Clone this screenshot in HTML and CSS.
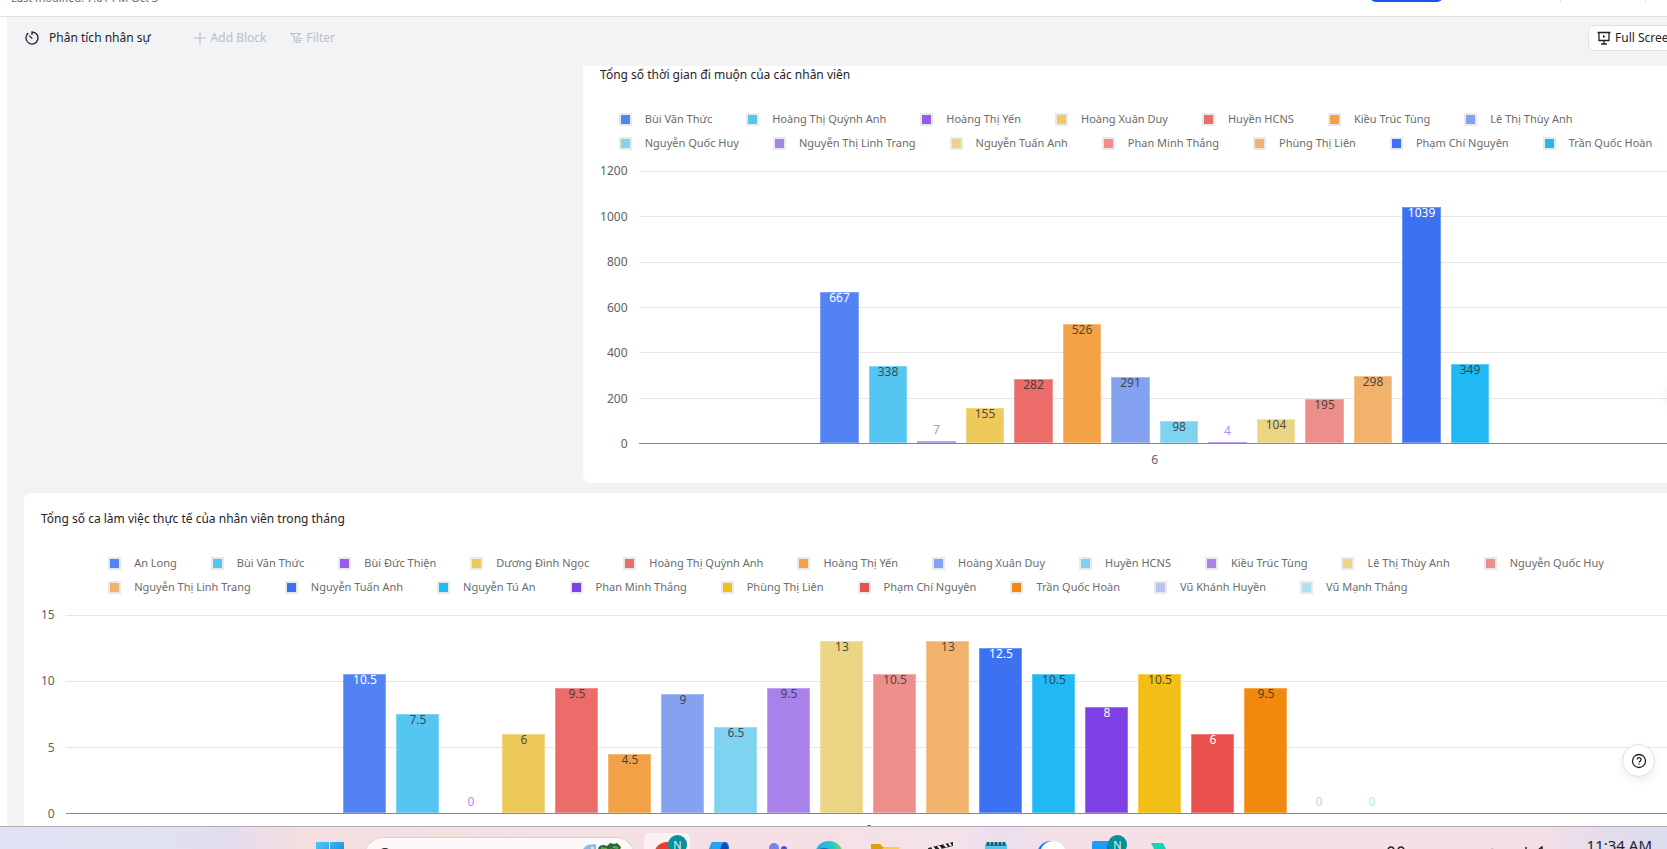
FILE: index.html
```html
<!DOCTYPE html>
<html lang="vi">
<head>
<meta charset="utf-8">
<title>Phân tích nhân sự</title>
<link rel="stylesheet" href="styles.css">
</head>
<body>
<header class="doc-header">
  <span class="modified">Last modified: 7:01 PM Oct 3</span>
  <div class="doc-actions">
    <button class="share" type="button" aria-label="Share"></button>
    <i class="divider"></i>
    <i class="divider"></i>
  </div>
</header>

<main class="workspace">
  <div class="toolbar">
    <h1 class="board-title">
      <svg class="icon" viewBox="0 0 14 14" width="14" height="14"><path d="M7 4V1a6 6 0 1 1-4 1.500M4.300 4.600 7.300 7.600M1.500 3.500 3.300 2.200" /></svg>
      Phân tích nhân sự
    </h1>
    <button class="tool" type="button" disabled>
      <svg class="icon thin" viewBox="0 0 12 12" width="12" height="12"><path d="M6 .5v11M.5 6h11"/></svg>
      Add Block
    </button>
    <button class="tool filter" type="button" disabled>
      <svg class="icon thin" viewBox="0 0 13 12" width="13" height="12"><path d="M1 1.500h9L7 5.400V10.500L4.500 9V5.400zM8.500 6.500h4M8.500 8.500h3M8.500 10.500h2"/></svg>
      Filter
    </button>
    <button class="fullscreen" type="button">
      <svg class="icon" viewBox="0 0 14 14" width="14" height="14"><path d="M.5 1.500h13M2 1.500v8h10v-8M7 9.500v3.500M4 13h6"/><path class="solid" d="M6 4v3l2.500-1.500z"/></svg>
      Full Screen
    </button>
  </div>

  <div class="canvas">
    <div class="board">
      <section class="card late">
        <h2>Tổng số thời gian đi muộn của các nhân viên</h2>
        <div class="legend">
          <ul>
            <li><i class="c1"></i>Bùi Văn Thức</li>
            <li><i class="c2"></i>Hoàng Thị Quỳnh Anh</li>
            <li><i class="c3"></i>Hoàng Thị Yến</li>
            <li><i class="c4"></i>Hoàng Xuân Duy</li>
            <li><i class="c5"></i>Huyền HCNS</li>
            <li><i class="c6"></i>Kiều Trúc Tùng</li>
            <li><i class="c7"></i>Lê Thị Thùy Anh</li>
          </ul>
          <ul>
            <li><i class="c8"></i>Nguyễn Quốc Huy</li>
            <li><i class="c9"></i>Nguyễn Thị Linh Trang</li>
            <li><i class="c10"></i>Nguyễn Tuấn Anh</li>
            <li><i class="c11"></i>Phan Minh Thắng</li>
            <li><i class="c12"></i>Phùng Thị Liên</li>
            <li><i class="c13"></i>Phạm Chí Nguyên</li>
            <li><i class="c14"></i>Trần Quốc Hoàn</li>
          </ul>
        </div>
        <div class="chart">
          <div class="y-axis"><span>1200</span><span>1000</span><span>800</span><span>600</span><span>400</span><span>200</span><span>0</span></div>
          <div class="plot">
            <div class="grid"><i></i><i></i><i></i><i></i><i></i><i></i><i></i></div>
            <ol class="bars">
              <li><b class="c1 light" style="height:55.6%">667</b></li>
              <li><b class="c2" style="height:28.2%">338</b></li>
              <li><span class="t3">7</span><b class="c9" style="height:0.7%"></b></li>
              <li><b class="c4" style="height:12.9%">155</b></li>
              <li><b class="c5" style="height:23.5%">282</b></li>
              <li><b class="c6" style="height:43.8%">526</b></li>
              <li><b class="c7" style="height:24.3%">291</b></li>
              <li><b class="c8" style="height:8.2%">98</b></li>
              <li><span class="t3">4</span><b class="c9" style="height:0.4%"></b></li>
              <li><b class="c10" style="height:8.7%">104</b></li>
              <li><b class="c11" style="height:16.3%">195</b></li>
              <li><b class="c12" style="height:24.8%">298</b></li>
              <li><b class="c13 light" style="height:86.6%">1039</b></li>
              <li><b class="c14" style="height:29.1%">349</b></li>
            </ol>
          </div>
          <div class="x-axis">6</div>
        </div>
      </section>

      <section class="card shifts">
        <h2>Tổng số ca làm việc thực tế của nhân viên trong tháng</h2>
        <div class="legend">
          <ul>
            <li><i class="c1"></i>An Long</li>
            <li><i class="c2"></i>Bùi Văn Thức</li>
            <li><i class="c3"></i>Bùi Đức Thiện</li>
            <li><i class="c4"></i>Dương Đình Ngọc</li>
            <li><i class="c5"></i>Hoàng Thị Quỳnh Anh</li>
            <li><i class="c6"></i>Hoàng Thị Yến</li>
            <li><i class="c7"></i>Hoàng Xuân Duy</li>
            <li><i class="c8"></i>Huyền HCNS</li>
            <li><i class="c9"></i>Kiều Trúc Tùng</li>
            <li><i class="c10"></i>Lê Thị Thùy Anh</li>
            <li><i class="c11"></i>Nguyễn Quốc Huy</li>
          </ul>
          <ul>
            <li><i class="c12"></i>Nguyễn Thị Linh Trang</li>
            <li><i class="c13"></i>Nguyễn Tuấn Anh</li>
            <li><i class="c14"></i>Nguyễn Tú An</li>
            <li><i class="c15"></i>Phan Minh Thắng</li>
            <li><i class="c16"></i>Phùng Thị Liên</li>
            <li><i class="c17"></i>Phạm Chí Nguyên</li>
            <li><i class="c18"></i>Trần Quốc Hoàn</li>
            <li><i class="c19"></i>Vũ Khánh Huyền</li>
            <li><i class="c20"></i>Vũ Mạnh Thắng</li>
          </ul>
        </div>
        <div class="chart">
          <div class="y-axis"><span>15</span><span>10</span><span>5</span><span>0</span></div>
          <div class="plot">
            <div class="grid"><i></i><i></i><i></i><i></i></div>
            <ol class="bars">
              <li><b class="c1 light" style="height:70%">10.5</b></li>
              <li><b class="c2" style="height:50%">7.5</b></li>
              <li><span class="t3">0</span></li>
              <li><b class="c4" style="height:40%">6</b></li>
              <li><b class="c5" style="height:63.3%">9.5</b></li>
              <li><b class="c6" style="height:30%">4.5</b></li>
              <li><b class="c7" style="height:60%">9</b></li>
              <li><b class="c8" style="height:43.3%">6.5</b></li>
              <li><b class="c9" style="height:63.3%">9.5</b></li>
              <li><b class="c10" style="height:86.7%">13</b></li>
              <li><b class="c11" style="height:70%">10.5</b></li>
              <li><b class="c12" style="height:86.7%">13</b></li>
              <li><b class="c13 light" style="height:83.3%">12.5</b></li>
              <li><b class="c14" style="height:70%">10.5</b></li>
              <li><b class="c15 light" style="height:53.3%">8</b></li>
              <li><b class="c16" style="height:70%">10.5</b></li>
              <li><b class="c17 light" style="height:40%">6</b></li>
              <li><b class="c18" style="height:63.3%">9.5</b></li>
              <li><span class="t19">0</span></li>
              <li><span class="t20">0</span></li>
            </ol>
          </div>
          <div class="x-axis">6</div>
        </div>
      </section>
    </div>
  </div>
</main>

<button class="side-handle" type="button" aria-label="Expand"></button>
<button class="help" type="button" aria-label="Help">
  <svg class="icon" viewBox="0 0 16 16" width="16" height="16"><circle cx="8" cy="8" r="6.500"/><path d="M6.200 6.600a1.900 1.900 0 1 1 2.700 1.700Q8 8.700 8 9.500M8 10.600v1.200"/></svg>
</button>

<footer class="taskbar">
  <div class="apps">
    <svg class="app start" viewBox="0 0 30 30" width="30" height="30"><defs><linearGradient id="win" x2="1" y2="1"><stop stop-color="#4cc9f8"/><stop offset="1" stop-color="#0a74d4"/></linearGradient></defs><path fill="url(#win)" d="M1 1h13v13H1zM15 1h14v13H15zM1 15h13v14H1zM15 15h14v14H15z"/></svg>
    <div class="search">
      <svg viewBox="0 0 20 20" width="20" height="20"><circle cx="9" cy="12" r="6" fill="none" stroke="#222" stroke-width="2"/></svg>
      <svg viewBox="0 0 42 20" width="42" height="20"><path d="M2 6l4-4 9-1v19H0z" fill="#8fb9e4"/><path d="M5 6h3v4H5zM10 4h3v4h-3z" fill="#d6e9f8"/><path d="M17 7q0-5 6-5l3 1 3-3 4 1 3-1 4 4-1 3 3 4-5-1-3 3 1 7h-5l1-7-6 3 2-5-6 2z" fill="#256b36"/><path d="M20 5l6 1M32 4l5 1M26 9l5-3" stroke="#5fae4a" stroke-width="2"/></svg>
    </div>
    <div class="app active">
      <svg viewBox="0 0 26 26" width="26" height="26"><circle cx="13" cy="13" r="13" fill="#e8402f"/><circle cx="13" cy="13" r="6" fill="#fff"/></svg>
      <span class="badge">N</span>
    </div>
    <svg class="app" viewBox="0 0 28 28" width="28" height="28"><path d="M7 1h15l2 4v20H3q-1-16 4-24z" fill="#1683e8"/><path d="M9 1h13q-6 2-8 9H4q1-7 5-9z" fill="#26a4f4"/><path d="M19 1q5 2 4 10l-7 4q-2-10 3-14z" fill="#1647b8"/></svg>
    <svg class="app" viewBox="0 0 28 28" width="28" height="28"><circle cx="14" cy="7" r="5" fill="#7b83eb"/><circle cx="24" cy="8" r="3" fill="#5059c9"/><path d="M0 8h16v14H0z" fill="#5b63cf"/><path d="M16 12h12v10H16z" fill="#5059c9"/></svg>
    <svg class="app" viewBox="0 0 28 28" width="28" height="28"><defs><linearGradient id="edge"><stop stop-color="#23a8e8"/><stop offset=".6" stop-color="#2bc3d2"/><stop offset="1" stop-color="#6ddc5a"/></linearGradient></defs><circle cx="14" cy="14" r="14" fill="url(#edge)"/><path d="M0 15q1-8 9-8 8 0 8 7-6-3-8 4-3 4 2 10Q0 26 0 15z" fill="#1470c0"/></svg>
    <svg class="app" viewBox="0 0 30 28" width="30" height="28"><path d="M1 3h9l3 3h16v8H1z" fill="#dda20a"/><path d="M1 9h10l3-3h15v20H1z" fill="#ffce3e"/></svg>
    <svg class="app" viewBox="0 0 28 28" width="28" height="28"><path d="M1 7 26 1v4L2 11z" fill="#222"/><path d="m5 6 3 3M11 5l3 3M17 3l3 3M22 2l2 3" stroke="#fff" stroke-width="2"/><path d="M2 12h24v14H2z" fill="#333"/></svg>
    <svg class="app" viewBox="0 0 28 28" width="28" height="28"><path d="M3 3h22v23H3z" fill="#54c8ec"/><path d="M6 1v4M10 1v4M14 1v4M18 1v4M22 1v4" stroke="#12606f" stroke-width="3"/></svg>
    <svg class="app" viewBox="0 0 28 28" width="28" height="28"><circle cx="14" cy="14" r="14" fill="#1677ff"/><circle cx="16" cy="13" r="13" fill="#fff"/></svg>
    <div class="app boxed">
      <svg viewBox="0 0 26 26" width="26" height="26"><path d="M0 2q0-2 2-2h22v26H0z" fill="#1f9cf5"/><path d="M15 4h11v18H15z" fill="#0f6fc0"/></svg>
      <span class="badge">N</span>
    </div>
    <svg class="app" viewBox="0 0 28 28" width="28" height="28"><path d="M6 2h12l5 10-5 9H6l5-9z" fill="#0bd8b6"/></svg>
  </div>
  <div class="tray">
    <svg viewBox="0 0 20 14" width="20" height="14"><path d="M2 5q0-4 3-4 3 0 3 4M12 5q0-4 3-4t3 4" fill="none" stroke="#222" stroke-width="1.500"/></svg>
    <svg class="tray-net" viewBox="0 0 60 14" width="60" height="14"><path d="M2 6q4-5 9 0M39 2h2M53 3l3-2v8" fill="none" stroke="#222" stroke-width="1.500"/></svg>
    <time>11:34 AM</time>
  </div>
</footer>
</body>
</html>
```
FILE: styles.css
```css
* { box-sizing: border-box; }

body {
  margin: 0;
  height: 100vh;
  display: flex;
  flex-direction: column;
  overflow: hidden;
  background: #fff;
  color: #1f2329;
  font: 12px/16px "Noto Sans", "Open Sans", sans-serif;
}

h1, h2, ul, ol { margin: 0; padding: 0; font-weight: 400; list-style: none; }
button { font: inherit; }

.icon { flex: none; fill: none; stroke: currentColor; stroke-width: 1.3; }
.icon.thin { stroke-width: 1.2; }
.icon .solid { fill: currentColor; stroke: none; }

/* Document header, scrolled almost out of view */
.doc-header {
  flex: none;
  height: 17px;
  display: flex;
  justify-content: space-between;
  align-items: flex-start;
  padding-left: 11px;
  overflow: hidden;
  border-bottom: 1px solid #dee0e3;
}
.modified { margin-top: -10px; color: #646a73; white-space: nowrap; font-size: 11px; }
.doc-actions { display: flex; align-items: flex-start; margin-top: -26px; padding-right: 21px; }
.share { width: 73px; height: 28px; margin-right: 117px; border: 0; border-radius: 6px; background: #1456f0; }
.divider { width: 1px; height: 28px; background: #dee0e3; }
.divider + .divider { margin-left: 84px; }

/* Dashboard */
.workspace {
  flex: 1;
  min-height: 0;
  display: flex;
  flex-direction: column;
  margin: 0 -21px 0 7px;
  background: #f1f3f5;
}
.toolbar {
  flex: none;
  height: 49px;
  display: flex;
  align-items: center;
  padding: 0 0 7px 18px;
}
.board-title { display: flex; align-items: center; gap: 10px; font-size: 12px; margin-right: 43px; }
.tool {
  display: flex;
  align-items: center;
  gap: 5px;
  margin-right: 24px;
  padding: 0;
  border: 0;
  background: none;
  color: #bbbfc4;
}
.tool.filter { gap: 3px; }
.fullscreen {
  display: flex;
  align-items: center;
  gap: 4px;
  height: 26px;
  width: 100px;
  margin-left: auto;
  padding: 0 8px;
  border: 1px solid #dee0e3;
  border-radius: 6px;
  background: #fff;
  color: #1f2329;
  white-space: nowrap;
}

.canvas { flex: 1; min-height: 0; overflow: hidden; padding-left: 17px; }
.board { display: flex; flex-direction: column; align-items: flex-end; gap: 10px; margin-top: -17px; }
.card { padding: 16px 17px 15px; border-radius: 8px; background: #fff; }
.card.late { width: 66.4%; }
.card.shifts { width: 100%; }
.card h2 { font-size: 12px; line-height: 20px; }

.legend { width: fit-content; margin: 22px auto 16px; color: #6b6b6b; font-size: 11px; }
.legend ul { display: flex; gap: 34px; }
.legend li { display: flex; align-items: center; gap: 13px; height: 24px; white-space: nowrap; }
.legend i { width: 13px; height: 13px; border: 2px solid #e8e9ec; }

.chart { display: grid; grid-template-columns: auto 1fr; column-gap: 11px; }
.y-axis {
  display: flex;
  flex-direction: column;
  justify-content: space-between;
  margin: -8px 0;
  text-align: right;
  color: #5f6165;
}
.plot { display: grid; }
.late .plot { height: 273px; }
.shifts .plot { height: 199px; }
.grid { grid-area: 1 / 1; display: flex; flex-direction: column; justify-content: space-between; }
.grid i { height: 1px; background: #e6e6e8; }
.grid i:last-child { background: #85878b; }
.bars { grid-area: 1 / 1; display: flex; gap: 10px; justify-self: center; padding-bottom: 1px; }
.late .bars { width: 64.8%; }
.shifts .bars { width: 65.4%; }
.bars li { flex: 1; display: flex; flex-direction: column; justify-content: flex-end; text-align: center; }
.bars b {
  font-weight: 400;
  line-height: 11px;
  color: #333d;
  box-shadow: inset 0 0 0 1px #fff4;
}
.bars b.light { color: #fff; }
.bars span { line-height: 12px; padding-bottom: 5px; }
.x-axis { grid-column: 2; margin-top: 8px; text-align: center; color: #5f6165; }

.c1 { background: #5383f2; }
.c2 { background: #55c5f1; }
.c3 { background: #935de9; }
.c4 { background: #edca5a; }
.c5 { background: #eb6c68; }
.c6 { background: #f2a147; }
.c7 { background: #84a2f0; }
.c8 { background: #7fd2f0; }
.c9 { background: #a981ea; }
.c10 { background: #ebd483; }
.c11 { background: #ec8e8a; }
.c12 { background: #f1b26c; }
.c13 { background: #3c72f2; }
.c14 { background: #20b9f3; }
.c15 { background: #7f41e6; }
.c16 { background: #f2bf16; }
.c17 { background: #e9504c; }
.c18 { background: #f2880e; }
.c19 { background: #b5c4f2; }
.c20 { background: #ade0f0; }
.t3 { color: #b08af0; }
.t19 { color: #c3d0f7; }
.t20 { color: #bce6f5; }

/* Floating buttons */
.help, .side-handle {
  position: absolute;
  display: flex;
  align-items: center;
  justify-content: center;
  width: 33px;
  height: 33px;
  padding: 0;
  border: 1px solid #dee0e3;
  border-radius: 50%;
  background: #fff;
  color: #1f2329;
  box-shadow: 0 4px 8px #1f232914;
}
.help { right: 12px; bottom: 72px; }
.side-handle { right: -33px; bottom: 440px; }

/* Taskbar, cut by the bottom of the screen */
.taskbar {
  flex: none;
  height: 23px;
  display: flex;
  justify-content: space-between;
  align-items: flex-start;
  overflow: hidden;
  border-top: 1px solid #b5abb5;
  background: linear-gradient(90deg, #dfe3f3 0, #e0e0f0 12%, #e6dbef 14%, #f3dfe0 18%, #f4e1e3 35%, #f5e0e5 50%, #f3e3e8 57%, #ebdfef 60%, #f4e0e6 64%, #f5e0e6 92%, #e6dcec 96%, #dadcef 100%);
}
.apps { display: flex; align-items: flex-start; padding-left: 315px; }
.app { flex: none; margin: 14px 14px 0 13px; }
.app.start { margin: 14px 19px 0 0; }
.search {
  display: flex;
  justify-content: space-between;
  width: 271px;
  height: 38px;
  margin: 10px 8px 0 0;
  padding: 5px 11px 0;
  border: 1px solid #dccfd4;
  border-radius: 19px;
  background: #fdf8f9;
}
.active, .boxed { position: relative; }
.app.active {
  width: 48px;
  height: 46px;
  margin: 5px 1px 0 0;
  padding: 9px 10px;
  border: 1px solid #eee0e5;
  border-radius: 6px;
  background: #fbf1f4;
}
.badge {
  position: absolute;
  top: 2px;
  left: 24px;
  width: 19px;
  height: 19px;
  border-radius: 50%;
  background: #0a8f9c;
  color: #d8f4f4;
  font-size: 11px;
  line-height: 19px;
  text-align: center;
}
.boxed .badge { top: -6px; left: 16px; }
.tray { display: flex; align-items: flex-start; padding-right: 15px; }
.tray svg { margin-top: 19px; }
.tray-net { margin-left: 80px; }
.tray time { margin: 8px 0 0 41px; font-size: 15px; line-height: 20px; }
```
